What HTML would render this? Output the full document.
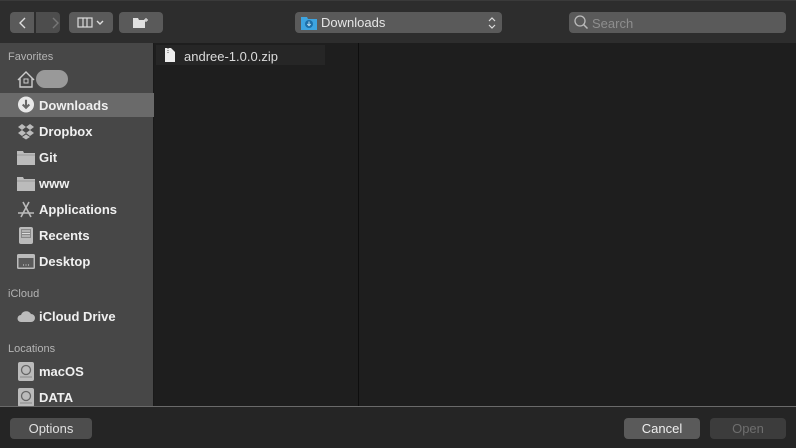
<!DOCTYPE html>
<html><head><style>
*{margin:0;padding:0;box-sizing:border-box}
body{width:796px;height:448px;overflow:hidden;background:#1e1e1e;font-family:"Liberation Sans",sans-serif;position:relative;color:#e6e6e6}
.tb{position:absolute;left:0;top:0;width:796px;height:43px;background:#2d2d2d;border-top:1px solid #3a3a3a}
.btn{position:absolute;background:#5a5a5a;border-radius:4px}
.side{position:absolute;left:0;top:43px;width:154px;height:363px;background:#474747;border-right:1px solid #1a1a1a}
.hd{position:absolute;left:8px;font-size:11px;color:#b4b4b4}
.it{position:absolute;left:0;width:154px;height:24px;font-size:13px;font-weight:bold;color:#f0f0f0;line-height:26px;padding-left:39px}
.ic{position:absolute;left:17px;top:4px;width:18px;height:17px}
.bot{position:absolute;left:0;top:406px;width:796px;height:42px;background:#252525;border-top:1px solid #6a6a6a}
.bb{position:absolute;top:11px;height:21px;border-radius:4px;font-size:13px;text-align:center;line-height:21px}
</style></head><body>
<div class="tb">
 <div class="btn" style="left:10px;top:11px;width:24px;height:21px;border-radius:4px 0 0 4px"></div>
 <div class="btn" style="left:36px;top:11px;width:24px;height:21px;border-radius:0 4px 4px 0;background:#4d4d4d"></div>
 <svg style="position:absolute;left:10px;top:11px" width="50" height="21"><path d="M15 6l-5 5 5 5" stroke="#ddd" stroke-width="1.4" fill="none"/><path d="M46 6l5 5-5 5" stroke="#777" stroke-width="1.4" fill="none" transform="translate(-3 0)"/></svg>
 <div class="btn" style="left:69px;top:11px;width:44px;height:21px"></div>
 <svg style="position:absolute;left:69px;top:11px" width="44" height="21"><rect x="9" y="6" width="14" height="9" fill="none" stroke="#ddd" stroke-width="1.2"/><path d="M14 6v9M18 6v9" stroke="#ddd" stroke-width="1.2"/><path d="M28 9l3 3 3-3" stroke="#ddd" stroke-width="1.4" fill="none"/></svg>
 <div class="btn" style="left:119px;top:11px;width:44px;height:21px"></div>
 <svg style="position:absolute;left:119px;top:11px" width="44" height="21"><path d="M14 6h5l1 2h6v8H14z" fill="#e0e0e0"/><path d="M27 6v4M25 8h4" stroke="#e0e0e0" stroke-width="1.2"/></svg>
 <div class="btn" style="left:295px;top:11px;width:207px;height:21px"></div>
 <svg style="position:absolute;left:301px;top:14px" width="16" height="15"><path d="M0 2h6l1 2h9v11H0z" fill="#3da4e0"/><circle cx="8" cy="9" r="4" fill="#1d6fa8"/><path d="M8 6.5v4M6.3 9l1.7 1.7L9.7 9" stroke="#bde" stroke-width="1" fill="none"/></svg>
 <div style="position:absolute;left:321px;top:14px;font-size:13px;color:#e6e6e6">Downloads</div>
 <svg style="position:absolute;left:487px;top:14px" width="10" height="16"><path d="M2 6l3-3 3 3M2 10l3 3 3-3" stroke="#ddd" stroke-width="1.2" fill="none"/></svg>
 <div class="btn" style="left:569px;top:11px;width:217px;height:21px"></div>
 <svg style="position:absolute;left:573px;top:13px" width="16" height="16"><circle cx="7" cy="7" r="5" stroke="#bbb" stroke-width="1.3" fill="none"/><path d="M10.5 10.5l4 4" stroke="#bbb" stroke-width="1.5"/></svg>
 <div style="position:absolute;left:592px;top:15px;font-size:13px;color:#8e8e8e">Search</div>
</div>
<div class="side">
 <div class="hd" style="top:8px">Favorites</div>
 <div class="it" style="top:24px"><svg class="ic" viewBox="0 0 18 17"><path d="M1 9L9 1l8 8M3 7v9h12V7" stroke="#ccc" stroke-width="1.4" fill="none"/><rect x="7" y="8" width="4" height="4" fill="none" stroke="#ccc"/></svg><span style="position:absolute;left:36px;top:3px;width:32px;height:18px;border-radius:9px;background:#999"></span></div>
 <div class="it" style="top:50px;background:#6a6a6a">Downloads<svg class="ic" style="top:3px" viewBox="0 0 18 18"><circle cx="9" cy="9" r="8.5" fill="#e8e8e8"/><path d="M9 4v8M5.5 9L9 12.5 12.5 9" stroke="#666" stroke-width="2.2" fill="none"/></svg></div>
 <div class="it" style="top:76px">Dropbox<svg class="ic" viewBox="0 0 18 17"><path d="M5 1l4 3-4 3-4-3zM13 1l4 3-4 3-4-3zM5 7l4 3-4 3-4-3zM13 7l4 3-4 3-4-3zM5 14l4-2.5 4 2.5-4 2.5z" fill="#bbb"/></svg></div>
 <div class="it" style="top:102px">Git<svg class="ic" viewBox="0 0 18 17"><path d="M0 2h6l1 2h11v12H0z" fill="#bbb"/><path d="M0 6h18" stroke="#999"/></svg></div>
 <div class="it" style="top:128px">www<svg class="ic" viewBox="0 0 18 17"><path d="M0 2h6l1 2h11v12H0z" fill="#bbb"/><path d="M0 6h18" stroke="#999"/></svg></div>
 <div class="it" style="top:154px">Applications<svg class="ic" viewBox="0 0 18 17"><path d="M6 1l8 15M12 1L4 16M1 12h16" stroke="#bbb" stroke-width="1.6" fill="none"/></svg></div>
 <div class="it" style="top:180px">Recents<svg class="ic" viewBox="0 0 18 17"><rect x="2" y="0" width="14" height="17" rx="2" fill="#bbb"/><rect x="4" y="2" width="10" height="9" fill="#888"/><path d="M5 4h8M5 6.5h8M5 9h8" stroke="#ddd"/></svg></div>
 <div class="it" style="top:206px">Desktop<svg class="ic" viewBox="0 0 18 17"><rect x="0" y="1" width="18" height="15" rx="1.5" fill="#bbb"/><rect x="1.5" y="5" width="15" height="9.5" fill="#5a5a5a"/><path d="M6 12h1M8.5 12h1M11 12h1" stroke="#ddd"/></svg></div>
 <div class="hd" style="top:245px">iCloud</div>
 <div class="it" style="top:261px">iCloud Drive<svg class="ic" viewBox="0 0 18 17"><path d="M4 14a3.5 3.5 0 010-7 5.5 5.5 0 0110-1 4 4 0 010 8z" fill="#bbb"/></svg></div>
 <div class="hd" style="top:300px">Locations</div>
 <div class="it" style="top:316px">macOS<svg class="ic" style="left:18px;top:3px;width:16px;height:19px" viewBox="0 0 16 19"><rect x="0" y="0" width="16" height="19" rx="2" fill="#bbb"/><circle cx="8" cy="8" r="4.5" stroke="#666" stroke-width="1.3" fill="none"/><path d="M2 15h12" stroke="#888"/></svg></div>
 <div class="it" style="top:342px">DATA<svg class="ic" style="left:18px;top:3px;width:16px;height:19px" viewBox="0 0 16 19"><rect x="0" y="0" width="16" height="19" rx="2" fill="#bbb"/><circle cx="8" cy="8" r="4.5" stroke="#666" stroke-width="1.3" fill="none"/><path d="M2 15h12" stroke="#888"/></svg></div>
</div>
<div style="position:absolute;left:156px;top:45px;width:169px;height:20px;background:#262626"></div>
<svg style="position:absolute;left:165px;top:48px" width="10" height="14"><path d="M0 0h6l4 4v10H0z" fill="#eee"/><path d="M3 0v6" stroke="#555" stroke-dasharray="1 1"/></svg>
<div style="position:absolute;left:184px;top:49px;font-size:13px;color:#dcdcdc">andree-1.0.0.zip</div>
<div style="position:absolute;left:358px;top:43px;width:1px;height:363px;background:#0e0e0e"></div>
<div class="bot">
 <div class="bb" style="left:10px;width:82px;background:#4d4d4d;color:#e0e0e0">Options</div>
 <div class="bb" style="left:624px;width:76px;background:#5a5a5a;color:#eee">Cancel</div>
 <div class="bb" style="left:710px;width:76px;background:#3c3c3c;color:#6e6e6e">Open</div>
</div>
</body></html>
